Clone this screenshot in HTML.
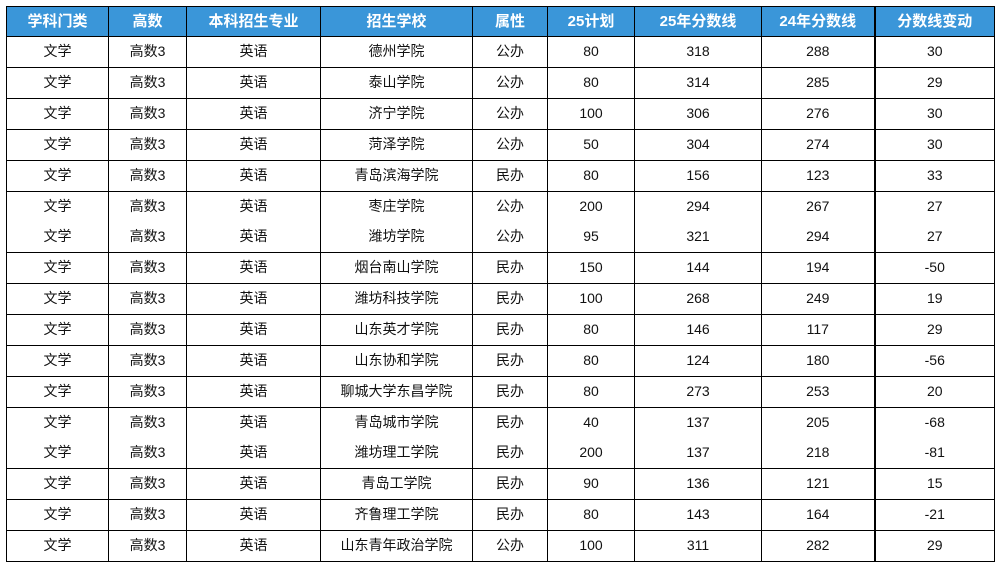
<!DOCTYPE html>
<html><head><meta charset="utf-8"><style>
body{margin:0;background:#fff;width:1000px;height:569px;overflow:hidden;font-family:"Liberation Sans","Noto Sans CJK SC",sans-serif;}
table{position:absolute;left:6px;top:6px;border-collapse:collapse;table-layout:fixed;}
td,th{border:1px solid #000;text-align:center;padding:0 0 2px 0;height:28px;font-size:14px;color:#111;}
th{background:#3a96d9;color:#fff;font-weight:bold;font-size:15px;height:27px;}
td.t{border-left:2px solid #000}
th.t{border-left:2px solid #000}
tr.m td{border-bottom:none}
tr.n td{border-top:none}
</style></head><body>
<table>
<colgroup><col style="width:102px"><col style="width:78px"><col style="width:134px"><col style="width:152px"><col style="width:75px"><col style="width:87px"><col style="width:127px"><col style="width:113px"><col style="width:120px"></colgroup>
<tr><th>学科门类</th><th>高数</th><th>本科招生专业</th><th>招生学校</th><th>属性</th><th>25计划</th><th>25年分数线</th><th>24年分数线</th><th class="t">分数线变动</th></tr>
<tr><td>文学</td><td>高数3</td><td>英语</td><td>德州学院</td><td>公办</td><td>80</td><td>318</td><td>288</td><td class="t">30</td></tr>
<tr><td>文学</td><td>高数3</td><td>英语</td><td>泰山学院</td><td>公办</td><td>80</td><td>314</td><td>285</td><td class="t">29</td></tr>
<tr><td>文学</td><td>高数3</td><td>英语</td><td>济宁学院</td><td>公办</td><td>100</td><td>306</td><td>276</td><td class="t">30</td></tr>
<tr><td>文学</td><td>高数3</td><td>英语</td><td>菏泽学院</td><td>公办</td><td>50</td><td>304</td><td>274</td><td class="t">30</td></tr>
<tr><td>文学</td><td>高数3</td><td>英语</td><td>青岛滨海学院</td><td>民办</td><td>80</td><td>156</td><td>123</td><td class="t">33</td></tr>
<tr class="m"><td>文学</td><td>高数3</td><td>英语</td><td>枣庄学院</td><td>公办</td><td>200</td><td>294</td><td>267</td><td class="t">27</td></tr>
<tr class="n"><td>文学</td><td>高数3</td><td>英语</td><td>潍坊学院</td><td>公办</td><td>95</td><td>321</td><td>294</td><td class="t">27</td></tr>
<tr><td>文学</td><td>高数3</td><td>英语</td><td>烟台南山学院</td><td>民办</td><td>150</td><td>144</td><td>194</td><td class="t">-50</td></tr>
<tr><td>文学</td><td>高数3</td><td>英语</td><td>潍坊科技学院</td><td>民办</td><td>100</td><td>268</td><td>249</td><td class="t">19</td></tr>
<tr><td>文学</td><td>高数3</td><td>英语</td><td>山东英才学院</td><td>民办</td><td>80</td><td>146</td><td>117</td><td class="t">29</td></tr>
<tr><td>文学</td><td>高数3</td><td>英语</td><td>山东协和学院</td><td>民办</td><td>80</td><td>124</td><td>180</td><td class="t">-56</td></tr>
<tr><td>文学</td><td>高数3</td><td>英语</td><td>聊城大学东昌学院</td><td>民办</td><td>80</td><td>273</td><td>253</td><td class="t">20</td></tr>
<tr class="m"><td>文学</td><td>高数3</td><td>英语</td><td>青岛城市学院</td><td>民办</td><td>40</td><td>137</td><td>205</td><td class="t">-68</td></tr>
<tr class="n"><td>文学</td><td>高数3</td><td>英语</td><td>潍坊理工学院</td><td>民办</td><td>200</td><td>137</td><td>218</td><td class="t">-81</td></tr>
<tr><td>文学</td><td>高数3</td><td>英语</td><td>青岛工学院</td><td>民办</td><td>90</td><td>136</td><td>121</td><td class="t">15</td></tr>
<tr><td>文学</td><td>高数3</td><td>英语</td><td>齐鲁理工学院</td><td>民办</td><td>80</td><td>143</td><td>164</td><td class="t">-21</td></tr>
<tr><td>文学</td><td>高数3</td><td>英语</td><td>山东青年政治学院</td><td>公办</td><td>100</td><td>311</td><td>282</td><td class="t">29</td></tr>
</table>
</body></html>
